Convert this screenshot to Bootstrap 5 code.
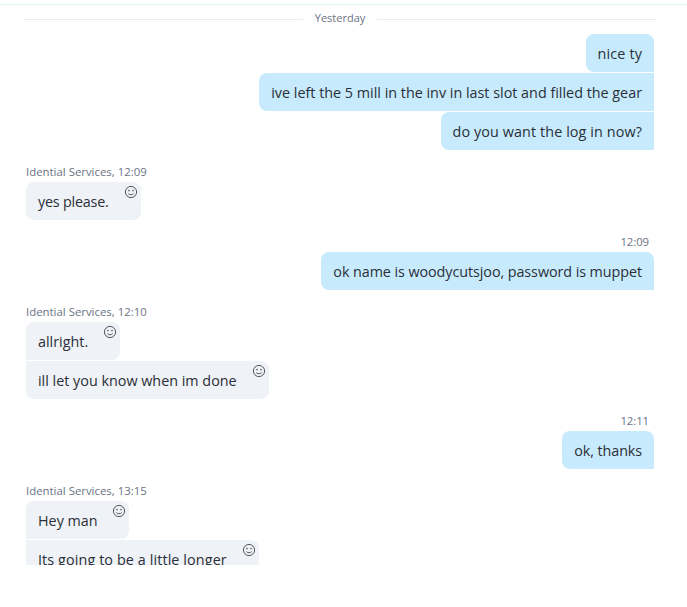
<!DOCTYPE html>
<html lang="en">
<head>
<meta charset="utf-8">
<title>Chat</title>
<link rel="stylesheet" href="https://cdn.jsdelivr.net/npm/bootstrap@5.3.0/dist/css/bootstrap.min.css">
<style>
html,body{height:100%;background:#fff}
body{font-family:"Open Sans","Noto Sans","Liberation Sans",sans-serif;overflow:hidden}
.chat-frame{height:561px;overflow:hidden;border-top:1px solid #e3f0f7;margin-top:4px}
.date-row{padding:0 31px 0 24px;height:29px;font-size:11px;color:#6b7385}
.date-row hr{flex:1 1 0;margin:0;border:0;border-top:1px solid #e3edf3;opacity:1}
.date-row span{padding:0 12px 5px;line-height:23px}
.thread{padding:0 33px 0 26px}
.stack{row-gap:1px}
.bubble{height:38px;padding:1px 12px 0;line-height:37px;font-size:14.35px;color:#2b2f38;white-space:nowrap;position:relative}
.sent{background:#c7ebfd;border-radius:8px 0 0 8px}
.sent.first{border-radius:8px 8px 0 8px}
.got{background:#eff2f7;border-radius:0 8px 8px 0;padding-right:31px}
.got.top{border-radius:8px 8px 8px 0}
.got.tail{border-radius:0 8px 8px 8px}
.got.solo{border-radius:8px}
.got.wide-pad{padding-right:32px}
.meta{font-size:11.4px;color:#6b7385;line-height:16px;height:18px;margin-top:14px}
.meta.mine{text-align:right;padding-right:5px;letter-spacing:-.1px}
.smile{position:absolute;top:3px;right:3px;width:14px;height:14px}
.tight-a{letter-spacing:-.2px}
.tight-b{letter-spacing:-.07px}
.tight-c{letter-spacing:-.1px}
.loose-a{letter-spacing:.11px}
.loose-b{letter-spacing:.11px}
.loose-c{letter-spacing:.15px}
</style>
</head>
<body>
<svg class="d-none"><symbol id="smile" viewBox="0 0 14 14"><g fill="none" stroke="#55595f"><circle cx="7" cy="7" r="5.6"/><path d="M4.3 8.6c1.4 1.5 4 1.5 5.4 0"/></g><circle cx="5" cy="5.6" r=".8" fill="#55595f"/><circle cx="9" cy="5.6" r=".8" fill="#55595f"/></symbol></svg>
<div class="chat-frame">
  <div class="date-row d-flex align-items-center"><hr><span>Yesterday</span><hr></div>
  <div class="thread d-flex flex-column">
    <div class="d-flex flex-column align-items-end stack">
      <div class="bubble sent first loose-c">nice ty</div>
      <div class="bubble sent">ive left the 5 mill in the inv in last slot and filled the gear</div>
      <div class="bubble sent loose-a">do you want the log in now?</div>
    </div>

    <div class="meta">Idential Services, 12:09</div>
    <div class="d-flex flex-column align-items-start stack">
      <div class="bubble got solo tight-a wide-pad">yes please.<svg class="smile"><use href="#smile"/></svg></div>
    </div>

    <div class="meta mine">12:09</div>
    <div class="d-flex flex-column align-items-end stack">
      <div class="bubble sent first tight-b">ok name is woodycutsjoo, password is muppet</div>
    </div>

    <div class="meta">Idential Services, 12:10</div>
    <div class="d-flex flex-column align-items-start stack">
      <div class="bubble got top wide-pad">allright.<svg class="smile"><use href="#smile"/></svg></div>
      <div class="bubble got tail wide-pad">ill let you know when im done<svg class="smile"><use href="#smile"/></svg></div>
    </div>

    <div class="meta mine">12:11</div>
    <div class="d-flex flex-column align-items-end stack">
      <div class="bubble sent first tight-c">ok, thanks</div>
    </div>

    <div class="meta">Idential Services, 13:15</div>
    <div class="d-flex flex-column align-items-start stack">
      <div class="bubble got top">Hey man<svg class="smile"><use href="#smile"/></svg></div>
      <div class="bubble got tail wide-pad loose-b">Its going to be a little longer<svg class="smile"><use href="#smile"/></svg></div>
    </div>
  </div>
</div>
</body>
</html>
